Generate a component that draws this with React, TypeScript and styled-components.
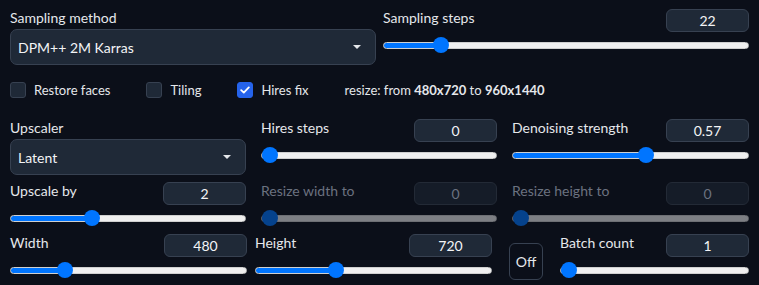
import React from 'react';
import styled, { createGlobalStyle } from 'styled-components';

const GlobalStyle = createGlobalStyle`
  html, body {
    margin: 0;
    padding: 0;
    background: #0b0f19;
  }
  body {
    font-family: Lato, "Noto Sans", sans-serif;
    color: #e5e7eb;
  }
`;

const Page = styled.div`
  width: 759px;
  height: 285px;
  box-sizing: border-box;
  padding: 8px 10px 0 10px;
  background: #0b0f19;
  overflow: hidden;
`;

const TwoCols = styled.div`
  display: grid;
  grid-template-columns: 366px 366px;
  column-gap: 7px;
`;

const ThreeCols = styled.div`
  display: grid;
  grid-template-columns: 236px 236px 237px;
  column-gap: 15px;
  row-gap: 6px;
  margin-top: 18px;
`;

const LastRow = styled.div`
  display: flex;
  align-items: flex-start;
  margin-top: 7px;
`;

const Cell = styled.div<{ $w: number; $ml?: number }>`
  width: ${p => p.$w}px;
  margin-left: ${p => p.$ml ?? 0}px;
  flex: none;
`;

const Block = styled.div`
  display: flex;
  flex-direction: column;
  min-width: 0;
`;

const Label = styled.span<{ $disabled?: boolean }>`
  font-size: 14px;
  line-height: 20px;
  color: ${p => (p.$disabled ? '#6b7280' : '#e5e7eb')};
  white-space: nowrap;
`;

const Select = styled.div`
  margin-top: 1px;
  height: 36px;
  box-sizing: border-box;
  display: flex;
  align-items: center;
  justify-content: space-between;
  padding: 0 14px 0 7px;
  background: #1f2937;
  border: 1px solid #374151;
  border-radius: 7px;
  font-size: 14px;
  color: #f3f4f6;
`;

const Caret = styled.span`
  width: 0;
  height: 0;
  border-left: 4.5px solid transparent;
  border-right: 4.5px solid transparent;
  border-top: 4px solid #e5e7eb;
`;

const Header = styled.div`
  display: flex;
  justify-content: space-between;
  align-items: flex-start;
  height: 24px;
`;

const NumberBox = styled.div<{ $disabled?: boolean }>`
  margin-top: 1px;
  width: 83px;
  height: 23px;
  box-sizing: border-box;
  display: flex;
  align-items: center;
  justify-content: center;
  background: ${p => (p.$disabled ? '#151c28' : '#1f2937')};
  border: 1px solid ${p => (p.$disabled ? '#232a36' : '#374151')};
  border-radius: 6px;
  font-size: 14px;
  color: ${p => (p.$disabled ? '#6b7280' : '#f3f4f6')};
`;

const Range = styled.input<{ $disabled?: boolean }>`
  -webkit-appearance: none;
  appearance: none;
  display: block;
  width: 100%;
  height: 16px;
  margin: 5px 0 0 0;
  padding: 0;
  background: transparent;
  opacity: ${p => (p.$disabled ? 0.5 : 1)};

  &::-webkit-slider-runnable-track {
    height: 7px;
    border-radius: 4px;
    background: var(--fill);
    border: 1px solid #cfcfcf;
    box-sizing: border-box;
  }
  &::-webkit-slider-thumb {
    -webkit-appearance: none;
    width: 16px;
    height: 16px;
    margin-top: -5.5px;
    border-radius: 50%;
    background: #0075ff;
    border: none;
  }
`;

const CheckRow = styled.div`
  display: flex;
  align-items: center;
  height: 20px;
  margin-top: 15px;
`;

const CheckItem = styled.label`
  display: flex;
  align-items: center;
  gap: 8px;
  margin-right: 36px;
  font-size: 13px;
  color: #e5e7eb;
`;

const Box = styled.span<{ $checked?: boolean }>`
  width: 16px;
  height: 16px;
  box-sizing: border-box;
  border-radius: 3px;
  display: flex;
  align-items: center;
  justify-content: center;
  background: ${p => (p.$checked ? '#2563eb' : '#1f2937')};
  border: 1px solid ${p => (p.$checked ? '#2563eb' : '#374151')};
`;

const ResizeNote = styled.span`
  font-size: 13px;
  color: #e5e7eb;
  b {
    font-weight: 700;
  }
`;

const ToggleButton = styled.button`
  margin-top: 10px;
  width: 34px;
  height: 37px;
  padding: 0;
  box-sizing: border-box;
  background: transparent;
  border: 1px solid #374151;
  border-radius: 6px;
  font-family: Lato, "Noto Sans", sans-serif;
  font-size: 14px;
  color: #e5e7eb;
`;

type SliderProps = {
  label: string;
  value: number;
  min: number;
  max: number;
  step?: number;
  disabled?: boolean;
};

const Slider: React.FC<SliderProps> = ({ label, value, min, max, step = 1, disabled }) => {
  const pct = ((value - min) / (max - min)) * 100;
  // fill must follow thumb centre, which travels inside an 8px inset
  const stop = `calc(8px + (100% - 16px) * ${pct / 100})`;
  const fill = `linear-gradient(to right, #0075ff 0, #0075ff ${stop}, #efefef ${stop}, #efefef 100%)`;
  return (
    <Block>
      <Header>
        <Label $disabled={disabled}>{label}</Label>
        <NumberBox $disabled={disabled}>{value}</NumberBox>
      </Header>
      <Range
        type="range"
        min={min}
        max={max}
        step={step}
        defaultValue={value}
        disabled={disabled}
        $disabled={disabled}
        style={{ ['--fill' as any]: fill }}
      />
    </Block>
  );
};

const Dropdown: React.FC<{ label: string; value: string }> = ({ label, value }) => (
  <Block>
    <Label>{label}</Label>
    <Select>
      <span>{value}</span>
      <Caret />
    </Select>
  </Block>
);

const Check: React.FC<{ label: string; checked?: boolean }> = ({ label, checked }) => (
  <CheckItem>
    <Box $checked={checked}>
      {checked && (
        <svg width="10" height="8" viewBox="0 0 10 8">
          <path d="M1.2 4.2 L3.8 6.6 L8.8 1.4" fill="none" stroke="#fff" strokeWidth="1.8" strokeLinecap="round" strokeLinejoin="round" />
        </svg>
      )}
    </Box>
    {label}
  </CheckItem>
);

export default function App() {
  return (
    <>
      <GlobalStyle />
      <Page>
        <TwoCols>
          <Dropdown label="Sampling method" value="DPM++ 2M Karras" />
          <Slider label="Sampling steps" value={22} min={1} max={150} />
        </TwoCols>

        <CheckRow>
          <Check label="Restore faces" />
          <Check label="Tiling" />
          <Check label="Hires fix" checked />
          <ResizeNote>
            resize: from <b>480x720</b> to <b>960x1440</b>
          </ResizeNote>
        </CheckRow>

        <ThreeCols>
          <Dropdown label="Upscaler" value="Latent" />
          <Slider label="Hires steps" value={0} min={0} max={150} />
          <Slider label="Denoising strength" value={0.57} min={0} max={1} step={0.01} />
          <Slider label="Upscale by" value={2} min={1} max={4} step={0.05} />
          <Slider label="Resize width to" value={0} min={0} max={2048} disabled />
          <Slider label="Resize height to" value={0} min={0} max={2048} disabled />
        </ThreeCols>

        <LastRow>
          <Cell $w={237}>
            <Slider label="Width" value={480} min={64} max={2048} step={8} />
          </Cell>
          <Cell $w={237} $ml={8}>
            <Slider label="Height" value={720} min={64} max={2048} step={8} />
          </Cell>
          <Cell $w={34} $ml={17}>
            <ToggleButton>Off</ToggleButton>
          </Cell>
          <Cell $w={189} $ml={17}>
            <Slider label="Batch count" value={1} min={1} max={100} />
          </Cell>
        </LastRow>
      </Page>
    </>
  );
}
